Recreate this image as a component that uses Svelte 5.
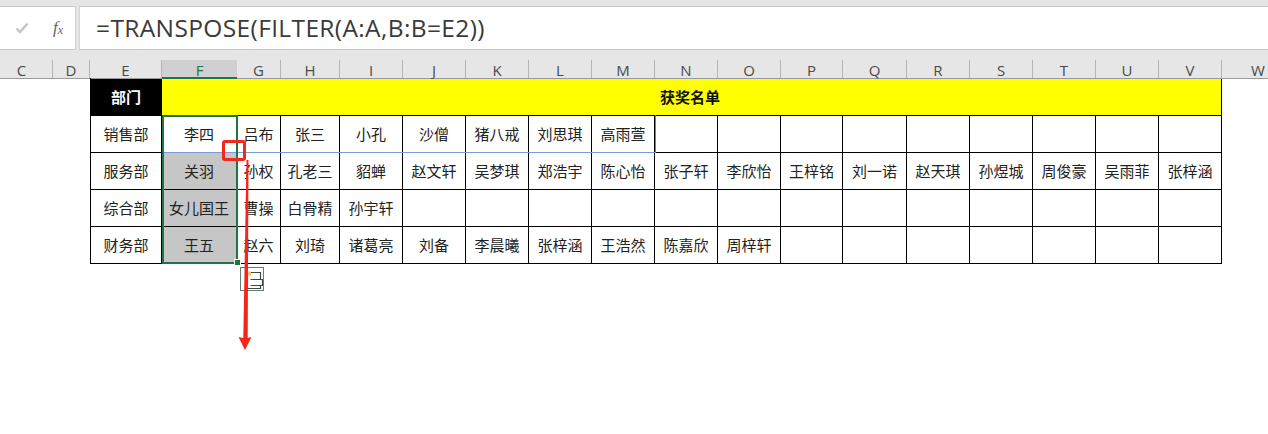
<script>
	const cols = [
		["C", 53], ["D", 37], ["E", 72], ["F", 75], ["G", 44], ["H", 59], ["I", 63], ["J", 63], ["K", 63], ["L", 63],
		["M", 63], ["N", 63], ["O", 63], ["P", 62], ["Q", 64], ["R", 63], ["S", 63], ["T", 63], ["U", 63], ["V", 63], ["W", 72]
	];
	const template = cols.map((c) => c[1] + "px").join(" ");
	const bodyTemplate = cols.slice(2, -1).map((c, i) => (i === 0 ? c[1] - 1 : c[1]) + "px").join(" ");

	const rows = [
		["销售部", "李四", "吕布", "张三", "小孔", "沙僧", "猪八戒", "刘思琪", "高雨萱"],
		["服务部", "关羽", "孙权", "孔老三", "貂蝉", "赵文轩", "吴梦琪", "郑浩宇", "陈心怡", "张子轩", "李欣怡", "王梓铭", "刘一诺", "赵天琪", "孙煜城", "周俊豪", "吴雨菲", "张梓涵"],
		["综合部", "女儿国王", "曹操", "白骨精", "孙宇轩"],
		["财务部", "王五", "赵六", "刘琦", "诸葛亮", "刘备", "李晨曦", "张梓涵", "王浩然", "陈嘉欣", "周梓轩"]
	];
	const total = cols.length - 3;
	const filled = rows.map((r) => [...r, ...Array(total - r.length).fill("")]);
</script>

<div class="page">
	<div class="formula-bar">
		<div class="buttons">
			<svg class="check" width="14" height="12" viewBox="0 0 14 12"><path d="M1.5 6.5 L5 10 L12.5 1.5" fill="none" stroke="#c4c4c4" stroke-width="2.4" /></svg>
			<span class="fx">f<sub>x</sub></span>
		</div>
		<div class="formula">=TRANSPOSE(FILTER(A:A,B:B=E2))</div>
	</div>

	<div class="col-head" style="grid-template-columns:{template}">
		{#each cols as c}
			<div class="col" class:active={c[0] === "F"}>{c[0]}</div>
		{/each}
	</div>

	<div class="table" style="grid-template-columns:{bodyTemplate}">
		<div class="cell dept-head">部门</div>
		<div class="cell award">获奖名单</div>
		{#each filled as row}
			{#each row as name, i}
				<div class="cell" class:sel={i === 1 && row[0] !== "销售部"}>{name}</div>
			{/each}
		{/each}
	</div>

	<!-- overlays on top of the sheet -->
	<div class="spill"></div>
	<div class="selection"><span class="handle"></span></div>
	<div class="paste">
		<svg width="22" height="23" viewBox="0 0 22 23"><path d="M6.5 4.5h13v7 M9.5 11.5h12v6h-12 M6.5 4.5v16h13v-3" fill="none" stroke="#3c4a44" stroke-width="1.2" /><path d="M7 3.5h3v4h-3z" fill="#e8c66a" /></svg>
	</div>
	<div class="red-box"></div>
	<svg class="arrow" width="20" height="191" viewBox="0 0 20 191"><path d="M11.5 0 L13.5 0 L12.7 178 L16.5 177 L10 190 L3.5 177 L8.3 178 Z" fill="#f5251c" /></svg>
</div>

<style>
	:global(body) {
		background: #fff;
	}
	.page {
		position: relative;
		width: 1268px;
		height: 434px;
		overflow: hidden;
		background: #fff;
		font-family: "Noto Sans CJK SC", "Noto Sans", sans-serif;
		color: #222;
	}
	.formula-bar {
		display: flex;
		gap: 3px;
		height: 60px;
		padding: 6px 0 10px;
		box-sizing: border-box;
		background: #e6e6e6;
	}
	.buttons {
		width: 76px;
		display: flex;
		align-items: center;
		gap: 24px;
		padding-left: 15px;
		box-sizing: border-box;
		background: #fff;
		border-top: 1px solid #c8c8c8;
		border-bottom: 1px solid #c8c8c8;
		border-right: 1px solid #d4d4d4;
	}
	.fx {
		font-family: "Liberation Serif", serif;
		font-style: italic;
		font-size: 17px;
		color: #666;
	}
	.fx sub {
		font-size: 12px;
		vertical-align: -1px;
	}
	.formula {
		flex: 1;
		background: #fff;
		border-top: 1px solid #c8c8c8;
		border-bottom: 1px solid #c8c8c8;
		border-left: 1px solid #d4d4d4;
		padding-left: 16px;
		font-family: "Open Sans", sans-serif;
		font-size: 24.5px;
		letter-spacing: 0.37px;
		line-height: 42px;
		color: #3a3a3a;
		white-space: nowrap;
	}
	.col-head {
		display: grid;
		height: 19px;
		background: #e6e6e6;
		border-bottom: 1px solid #9a9a9a;
		box-sizing: border-box;
	}
	.col {
		font-family: "Open Sans", sans-serif;
		font-size: 15px;
		line-height: 21px;
		text-align: center;
		color: #4a4a4a;
		border-right: 1px solid #b4b4b4;
		box-sizing: border-box;
		height: 18px;
	}
	.col:first-child {
		padding-right: 9px;
	}
	.col:last-child {
		border-right: none;
	}
	.col.active {
		height: 19px;
		background: #d0d0d0;
		color: #217346;
		border-bottom: 2px solid #217346;
		border-right: none;
	}
	.table {
		display: grid;
		grid-auto-rows: 37px;
		margin-left: 90px;
		width: 1132px;
		border-left: 1px solid #000;
		box-sizing: border-box;
		margin-top: -1px;
		padding-top: 1px;
	}
	.cell {
		display: flex;
		align-items: center;
		justify-content: center;
		font-size: 15px;
		padding-bottom: 2px;
		white-space: nowrap;
		border-right: 1px solid #000;
		border-bottom: 1px solid #000;
		box-sizing: border-box;
	}
	.dept-head {
		background: #000;
		color: #fff;
		font-weight: 700;
	}
	.award {
		grid-column: 2 / -1;
		background: #ff0;
		color: #111;
		font-weight: 700;
		padding-right: 3px;
	}
	.sel {
		background: #c6c6c6;
	}
	.spill {
		position: absolute;
		left: 162px;
		top: 115px;
		width: 494px;
		height: 38px;
		box-sizing: border-box;
		border-right: 1px solid #5b84c9;
		border-bottom: 1px solid #7d9bd3;
	}
	.selection {
		position: absolute;
		left: 162px;
		top: 115px;
		width: 76px;
		height: 149px;
		box-sizing: border-box;
		border: 2px solid #217346;
	}
	.handle {
		position: absolute;
		right: -5px;
		bottom: -4px;
		width: 5px;
		height: 5px;
		background: #217346;
		border: 1px solid #fff;
	}
	.paste {
		position: absolute;
		left: 240px;
		top: 267px;
		width: 24px;
		height: 24px;
		box-sizing: border-box;
		border: 1px solid #5f7f70;
		background: #fff;
	}
	.paste svg {
		display: block;
	}
	.red-box {
		position: absolute;
		left: 222px;
		top: 140px;
		width: 24px;
		height: 21px;
		box-sizing: border-box;
		border: 3px solid #f0281e;
		border-radius: 3px;
	}
	.arrow {
		position: absolute;
		left: 235px;
		top: 160px;
	}
</style>
